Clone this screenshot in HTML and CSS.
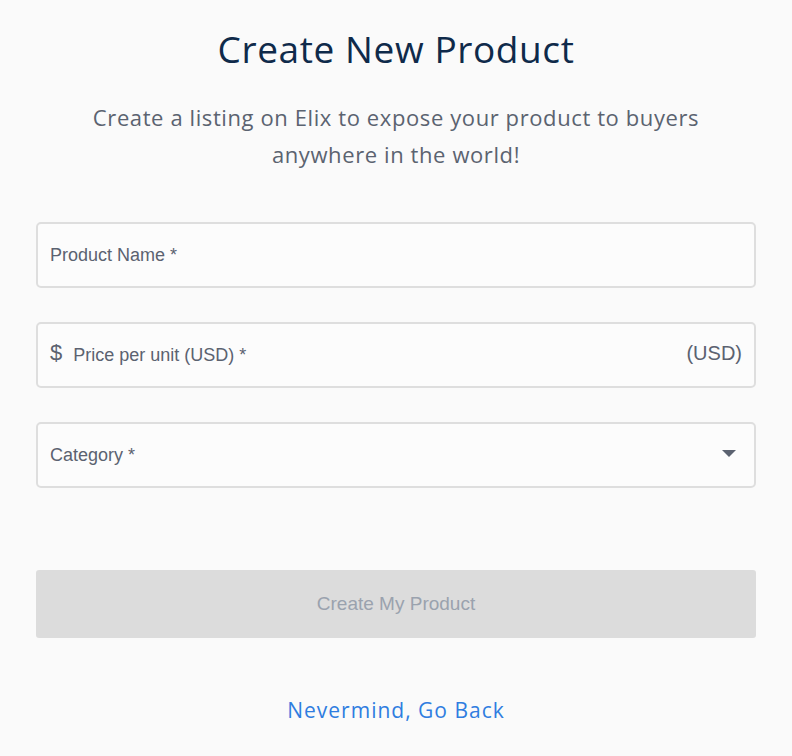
FILE: index.html
```html
<!DOCTYPE html>
<html>
<head>
<meta charset="utf-8">
<link rel="stylesheet" href="styles.css">
</head>
<body>
<main class="page">
  <h1 class="title">Create New Product</h1>
  <p class="subtitle">Create a listing on Elix to expose your product to buyers anywhere in the world!</p>
  <form class="form">
    <div class="field">
      <span class="placeholder">Product Name *</span>
    </div>
    <div class="field">
      <span class="prefix">$</span>
      <span class="placeholder">Price per unit (USD) *</span>
      <span class="suffix">(USD)</span>
    </div>
    <div class="field">
      <span class="placeholder">Category *</span>
      <svg class="caret" width="14" height="8" viewBox="0 0 14 8"><path d="M0 0 L14 0 L7 7 Z" fill="#5b6270"/></svg>
    </div>
    <button type="button" class="submit">Create My Product</button>
  </form>
  <a class="back" href="#">Nevermind, Go Back</a>
</main>
</body>
</html>
```
FILE: styles.css
```css
html, body {
  margin: 0;
  padding: 0;
  background: #fafafa;
}
.page {
  display: flex;
  flex-direction: column;
  align-items: center;
  padding: 0 36px;
  width: 720px;
}
.title {
  margin: 26px 0 0;
  font-family: "Open Sans", sans-serif;
  font-weight: 400;
  font-size: 37px;
  line-height: 46px;
  color: #0f2a4a;
  letter-spacing: 0.6px;
}
.subtitle {
  margin: 27px 0 0;
  width: 640px;
  text-align: center;
  font-family: "Open Sans", sans-serif;
  font-size: 22px;
  line-height: 37px;
  color: #5b6370;
  letter-spacing: 0.6px;
}
.form {
  margin-top: 49px;
  width: 720px;
  display: flex;
  flex-direction: column;
  gap: 34px;
}
.field {
  box-sizing: border-box;
  height: 66px;
  border: 2px solid #dedede;
  border-radius: 5px;
  background: #fcfcfc;
  display: flex;
  align-items: center;
  padding: 0 12px;
  font-family: "Liberation Sans", Arial, sans-serif;
  color: #5b6270;
}
.placeholder {
  font-size: 18px;
  flex: 1;
}
.prefix {
  font-size: 22px;
  margin-right: 11px;
  margin-top: -4px;
}
.suffix {
  font-size: 20px;
  margin-top: -4px;
}
.caret {
  margin-right: 6px;
  margin-top: -2px;
}
.submit {
  margin-top: 48px;
  height: 68px;
  border: none;
  border-radius: 3px;
  background: #dcdcdc;
  color: #9aa2ae;
  font-family: "Liberation Sans", Arial, sans-serif;
  font-size: 19px;
}
.back {
  margin-top: 58px;
  font-family: "Open Sans", sans-serif;
  font-size: 21px;
  letter-spacing: 1px;
  color: #2f7de0;
  text-decoration: none;
}
```
